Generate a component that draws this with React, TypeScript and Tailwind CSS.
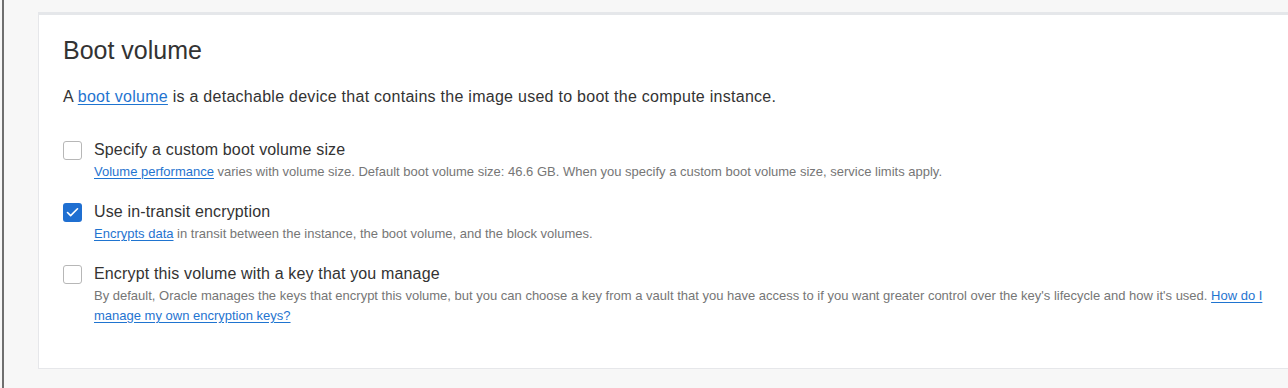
import { Check } from "lucide-react";

const font = { fontFamily: '"Liberation Sans", Arial, sans-serif' };

function Box({ checked }: { checked?: boolean }) {
  return checked ? (
    <span className="mt-[1px] flex h-[19px] w-[19px] shrink-0 items-center justify-center rounded-[3px] bg-[#1f6fd1]">
      <Check size={15} strokeWidth={2.6} className="text-white" />
    </span>
  ) : (
    <span className="mt-[1px] h-[19px] w-[19px] shrink-0 rounded-[3px] border border-[#b7b7b7] bg-white" />
  );
}

function Option({
  label,
  checked,
  children,
}: {
  label: string;
  checked?: boolean;
  children: React.ReactNode;
}) {
  return (
    <div className="flex gap-[12px]">
      <Box checked={checked} />
      <div className="w-[1185px]">
        <div className="text-[16px] leading-[20px] tracking-[0.15px] text-[#333]">{label}</div>
        <p className="mt-[2px] text-[13px] leading-[20px] text-[#767676]">{children}</p>
      </div>
    </div>
  );
}

const link = "text-[#1f74d0] underline underline-offset-2";

export default function App() {
  return (
    <div className="h-[388px] w-[1288px] overflow-hidden bg-[#f7f7f7] pl-[2px]" style={font}>
      <div className="h-full border-l-2 border-[#6f6f6f] pl-[34px] pt-[12px]">
        <div className="w-[1280px] border-x border-b border-t-[3px] border-[#e6e7ea] border-t-[#e5e7ea] bg-white pb-[42px] pl-[24px] pt-[21px]">
          {/* Header */}
          <h2 className="text-[25px] leading-[29px] text-[#333]">Boot volume</h2>
          <p className="mt-[22px] text-[16px] leading-[20px] tracking-[0.27px] text-[#333]">
            A <a className={link}>boot volume</a> is a detachable device that contains the image
            used to boot the compute instance.
          </p>

          <div className="mt-[33px] flex flex-col gap-[20px]">
            <Option label="Specify a custom boot volume size">
              <a className={link}>Volume performance</a> varies with volume size. Default boot
              volume size: 46.6 GB. When you specify a custom boot volume size, service limits
              apply.
            </Option>
            <Option label="Use in-transit encryption" checked>
              <a className={link}>Encrypts data</a> in transit between the instance, the boot
              volume, and the block volumes.
            </Option>
            <Option label="Encrypt this volume with a key that you manage">
              By default, Oracle manages the keys that encrypt this volume, but you can choose a
              key from a vault that you have access to if you want greater control over the key's
              lifecycle and how it's used.{" "}
              <a className={link}>
                How do I<br />
                manage my own encryption keys?
              </a>
            </Option>
          </div>
        </div>
      </div>
    </div>
  );
}
